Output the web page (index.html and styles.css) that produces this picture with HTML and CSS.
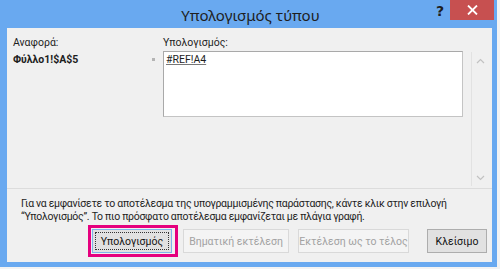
FILE: index.html
```html
<!DOCTYPE html>
<html lang="el">
  <head>
    <meta charset="utf-8" />
    <title>Υπολογισμός τύπου</title>
    <link rel="stylesheet" href="styles.css">
  </head>

  <body>
    <div class="window">
      <div class="titlebar">
        <div class="title">Υπολογισμός τύπου</div>
        <div class="help">?</div>
        <div class="close">
          <svg width="11" height="10" viewBox="0 0 11 10">
            <path d="M1 0.5 L10 9.5 M10 0.5 L1 9.5" stroke="#fff" stroke-width="1.8" fill="none" />
          </svg>
        </div>
      </div>

      <div class="content">
        <div class="main">
          <div class="ref-col">
            <div class="label">Αναφορά:</div>
            <div class="ref-value">Φύλλο1!$A$5</div>
          </div>
          <div class="dot-col"><span class="dot"></span></div>
          <div class="calc-col">
            <div class="label">Υπολογισμός:</div>
            <div class="calc-box"><span class="expr">#REF!A4</span></div>
          </div>
          <div class="scroll">
            <svg width="9" height="6" viewBox="0 0 9 6">
              <path d="M1 5 L4.5 1.5 L8 5" stroke="#c2c2c2" stroke-width="1.2" fill="none" />
            </svg>
            <svg width="9" height="6" viewBox="0 0 9 6">
              <path d="M1 1 L4.5 4.5 L8 1" stroke="#c2c2c2" stroke-width="1.2" fill="none" />
            </svg>
          </div>
        </div>

        <div class="note">
          Για να εμφανίσετε το αποτέλεσμα της υπογραμμισμένης παράστασης, κάντε κλικ στην επιλογή<br>
          “Υπολογισμός”. Το πιο πρόσφατο αποτέλεσμα εμφανίζεται με πλάγια γραφή.
        </div>

        <div class="buttons">
          <span class="highlight">
            <button type="button" class="btn default" id="evalButton">Υπολογισμός</button>
          </span>
          <button type="button" class="btn" id="stepInButton" disabled>Βηματική εκτέλεση</button>
          <button type="button" class="btn" id="stepOutButton" disabled>Εκτέλεση ως το τέλος</button>
          <button type="button" class="btn" id="closeButton">Κλείσιμο</button>
        </div>
      </div>
    </div>
  </body>
</html>
```

FILE: styles.css
```css
body {
  margin: 0;
  background-color: #f3f3f3;
  font-family: Roboto, "Noto Sans", sans-serif;
  font-size: 10.5px;
  color: #1e1e1e;
}

.window {
  width: 497px;
  height: 267px;
  background-color: #69a9f0;
  display: flex;
  flex-direction: column;
  box-sizing: border-box;
  padding: 0 5px 5px 7px;
}

.titlebar {
  height: 28px;
  display: flex;
  align-items: flex-start;
  position: relative;
}

.title {
  flex: 1;
  text-align: center;
  font-family: "Noto Sans", sans-serif;
  font-size: 15px;
  line-height: 31px;
  padding-left: 2px;
  color: #1e1e1e;
}

.help {
  position: absolute;
  right: 48px;
  top: 3px;
  font-family: "DejaVu Sans", sans-serif;
  font-weight: bold;
  font-size: 14px;
  color: #1e1e1e;
}

.close {
  position: absolute;
  right: -2px;
  top: 0;
  width: 44px;
  height: 20px;
  background-color: #c75050;
  display: flex;
  align-items: center;
  justify-content: center;
}

.content {
  flex: 1;
  background-color: #f0f0f0;
  display: flex;
  flex-direction: column;
}

.main {
  height: 161px;
  box-sizing: border-box;
  padding: 7px 0 0 6px;
  display: flex;
  border-bottom: 1px solid #dcdcdc;
}

.label {
  line-height: 15px;
  height: 16px;
}

.ref-col {
  width: 139px;
}

.ref-value {
  font-weight: bold;
  line-height: 15px;
  padding-top: 1px;
}

.dot-col {
  width: 11px;
  padding-top: 23px;
  box-sizing: border-box;
}

.dot {
  display: block;
  width: 3px;
  height: 3px;
  background-color: #b4b4b4;
}

.calc-col {
  width: 300px;
}

.calc-box {
  height: 66px;
  box-sizing: border-box;
  background-color: #fff;
  border: 1px solid #a9a9a9;
  border-right-color: #c4c4c4;
  border-bottom-color: #c4c4c4;
  padding: 1px 2px;
  line-height: 14px;
}

.expr {
  text-decoration: underline;
  text-decoration-color: #777;
}

.scroll {
  margin: 17px 0 0 8px;
  width: 18px;
  height: 134px;
  border-left: 1px solid #e2e2e2;
  display: flex;
  flex-direction: column;
  justify-content: space-between;
  align-items: center;
  padding: 6px 0 5px;
  box-sizing: border-box;
}

.note {
  padding: 8px 0 0 14px;
  line-height: 13px;
  height: 36px;
  box-sizing: border-box;
  white-space: nowrap;
  letter-spacing: -0.3px;
}

.buttons {
  display: flex;
  align-items: center;
  padding-left: 81px;
}

.highlight {
  display: inline-flex;
  border: 3px solid #e5007e;
  padding: 1px 3px 1px 1px;
  margin-right: 5px;
}

.btn {
  height: 24px;
  box-sizing: border-box;
  font-family: inherit;
  font-size: 10.5px;
  white-space: nowrap;
  padding: 0;
  margin: 0;
  border: 1px solid #adadad;
  background-color: #e1e1e1;
  color: #111;
}

.btn:disabled {
  border-color: #d9d9d9;
  background-color: #f4f4f4;
  color: #a2a2a2;
}

.default {
  width: 80px;
  border-color: #7eb4ea;
  outline: 1px dotted #333;
  outline-offset: -4px;
}

#stepInButton {
  width: 106px;
  margin-right: 9px;
}

#stepOutButton {
  width: 111px;
  margin-right: 18px;
}

#closeButton {
  width: 60px;
}
```
